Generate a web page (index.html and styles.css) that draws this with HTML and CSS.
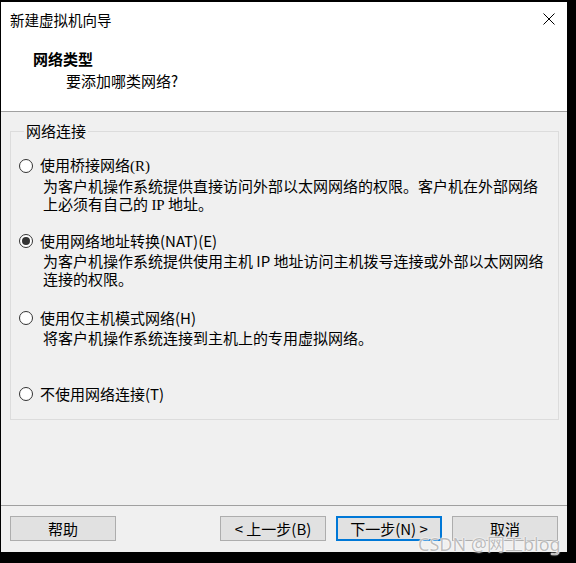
FILE: index.html
```html
<!DOCTYPE html>
<html lang="zh-CN">
<head>
<meta charset="utf-8">
<title>新建虚拟机向导</title>
<link rel="stylesheet" href="styles.css">
</head>
<body>
<div class="window">
  <div class="header">
    <div class="titlebar">
      <span class="title">新建虚拟机向导</span>
      <svg class="close" width="12" height="12" viewBox="0 0 12 12"><path d="M0.5 0.5 L11.5 11.5 M11.5 0.5 L0.5 11.5" stroke="#000" stroke-width="1" fill="none"/></svg>
    </div>
    <div class="heading">网络类型</div>
    <div class="subheading">要添加哪类网络?</div>
  </div>
  <div class="content">
    <fieldset class="group">
      <legend class="legend">网络连接</legend>
      <div class="options">
        <div class="option opt1">
          <div class="radio-row"><span class="radio"></span><span>使用桥接网络<span class="serif">(R)</span></span></div>
          <div class="desc">为客户机操作系统提供直接访问外部以太网网络的权限。客户机在外部网络</div>
          <div class="desc">上必须有自己的 <span class="serif">IP</span> 地址。</div>
        </div>
        <div class="option opt2">
          <div class="radio-row"><span class="radio checked"></span><span>使用网络地址转换(NAT)(E)</span></div>
          <div class="desc">为客户机操作系统提供使用主机 IP 地址访问主机拨号连接或外部以太网网络</div>
          <div class="desc">连接的权限。</div>
        </div>
        <div class="option opt3">
          <div class="radio-row"><span class="radio"></span><span>使用仅主机模式网络(H)</span></div>
          <div class="desc">将客户机操作系统连接到主机上的专用虚拟网络。</div>
        </div>
        <div class="option opt4">
          <div class="radio-row"><span class="radio"></span><span>不使用网络连接(T)</span></div>
        </div>
      </div>
    </fieldset>
  </div>
  <div class="footer">
    <button class="btn">帮助</button>
    <div class="spacer"></div>
    <button class="btn">&lt; 上一步(B)</button>
    <button class="btn primary">下一步(N) &gt;</button>
    <button class="btn">取消</button>
  </div>
</div>
<div class="watermark">CSDN @网工blog</div>
</body>
</html>
```
FILE: styles.css
```css
* { box-sizing: border-box; }
html, body { margin: 0; padding: 0; }
body {
  background: #000;
  width: 576px;
  height: 563px;
  overflow: hidden;
  position: relative;
  font-family: "Noto Sans CJK SC", "Microsoft YaHei", sans-serif;
  font-size: 15px;
  color: #000;
}
.window {
  margin: 2px 0 0 1px;
  width: 566px;
  height: 550px;
  background: #f0f0f0;
  display: flex;
  flex-direction: column;
}
.header {
  background: #fff;
  height: 110px;
  border-bottom: 1px solid #a0a0a0;
  flex: none;
}
.titlebar {
  height: 36px;
  display: flex;
  align-items: center;
  justify-content: space-between;
  padding: 0 12px 0 9px;
}
.title { line-height: 36px; font-size: 14.5px; }
.close { display: block; margin-top: -2px; }
.heading {
  font-weight: bold;
  line-height: 18px;
  margin-top: 12px;
  padding-left: 32px;
}
.subheading {
  line-height: 18px;
  margin-top: 4px;
  padding-left: 65px;
}
.content {
  flex: 1;
  padding: 10px 8px 0 9px;
}
.group {
  margin: 0;
  padding: 0 0 0 8px;
  border: 1px solid #dcdcdc;
  height: 298px;
  min-width: 0;
}
.legend {
  line-height: 18px;
  padding: 0 2px;
  margin-left: 5px;
}
.options { padding-top: 16px; }
.option { display: flex; flex-direction: column; }
.opt1 { height: 76px; }
.opt2 { height: 77px; }
.opt3 { height: 76px; }
.radio-row {
  display: flex;
  align-items: center;
  gap: 7px;
  line-height: 18px;
}
.radio {
  width: 14px;
  height: 14px;
  border: 1px solid #333;
  border-radius: 50%;
  background: #fff;
  flex: none;
  display: flex;
  align-items: center;
  justify-content: center;
}
.radio.checked::after {
  content: "";
  width: 8px;
  height: 8px;
  border-radius: 50%;
  background: #333;
}
.desc {
  line-height: 18px;
  padding-left: 24px;
  white-space: nowrap;
}
.radio-row + .desc { margin-top: 2px; }
.serif { font-family: "Liberation Serif", serif; }
.footer {
  flex: none;
  height: 47px;
  border-top: 1px solid #a0a0a0;
  display: flex;
  align-items: flex-start;
  padding: 10px 9px 0 9px;
  gap: 10px;
}
.spacer { flex: 1; }
.btn {
  width: 106px;
  height: 25px;
  background: #e1e1e1;
  border: 1px solid #adadad;
  font-family: inherit;
  font-size: 15px;
  color: #000;
  padding: 0;
  line-height: 22px;
}
.btn.primary { border: 2px solid #0078d7; }
.watermark {
  position: absolute;
  left: 418px;
  top: 533px;
  font-family: "Noto Sans", "Noto Sans CJK SC", sans-serif;
  font-size: 18px;
  line-height: 22px;
  color: #bdbdbd;
  text-shadow: 0 0 1px #fff, 0 0 1px #fff, 0 0 2px #fff;
}
```
